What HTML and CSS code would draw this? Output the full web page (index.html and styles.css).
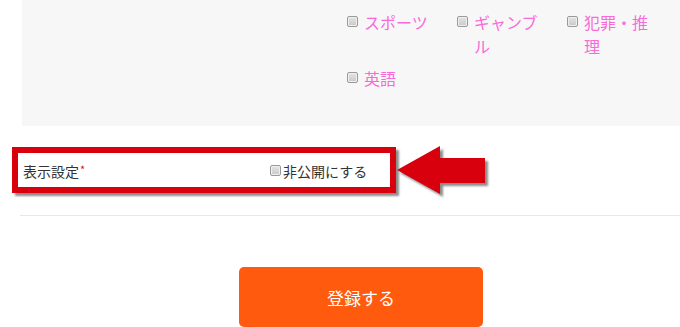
FILE: index.html
```html
<!DOCTYPE html>
<html lang="ja">
<head>
<meta charset="UTF-8">
<meta name="viewport" content="width=device-width, initial-scale=1.0">
<title>登録フォーム</title>
<link rel="stylesheet" href="styles.css">
</head>
<body>

<!-- Genre choices (tail of the list) -->
<div class="panel">
    <div class="choices">
        <label class="choice"><input type="checkbox"><span>スポーツ</span></label>
        <label class="choice"><input type="checkbox"><span>ギャンブル</span></label>
        <label class="choice"><input type="checkbox"><span>犯罪・推理</span></label>
        <label class="choice"><input type="checkbox"><span>英語</span></label>
    </div>
</div>

<!-- Visibility row, with the red annotation on top -->
<div class="row">
    <div class="row-label">表示設定<span class="req">*</span></div>
    <label class="private"><input type="checkbox">非公開にする</label>

    <div class="mark-box"></div>
    <svg class="mark-arrow" width="100" height="60" viewBox="0 0 100 60">
        <polygon points="2,25 45,1 45,13 90,13 90,38 45,38 45,49" fill="#d9000d"/>
    </svg>
</div>

<div class="actions">
    <button class="submit">登録する</button>
</div>

</body>
</html>
```

FILE: styles.css
```css
body {
    margin: 0;
    background-color: #ffffff;
    font-family: "Noto Sans CJK JP", "Noto Sans", sans-serif;
    color: #333333;
    overflow: hidden;
}

.panel {
    margin-left: 22px;
    height: 126px;
    background-color: #f7f7f7;
}

.choices {
    display: flex;
    flex-wrap: wrap;
    width: 330px;
    margin-left: 325px;
    padding-top: 10px;
    row-gap: 8px;
}

.choice {
    display: flex;
    align-items: flex-start;
    width: 110px;
    font-size: 16px;
    line-height: 24px;
    color: #f76ad9;
}

.choice span {
    width: 72px;
}

input[type="checkbox"] {
    appearance: none;
    -webkit-appearance: none;
    margin: 0;
    width: 11px;
    height: 11px;
    border: 1px solid #9a9a9a;
    border-radius: 2px;
    background: linear-gradient(#e4e4e4, #c9c9c9);
    box-shadow: inset 0 0 0 1px #efefef;
}

.choice input {
    margin-top: 6px;
    margin-right: 6px;
}

.row {
    position: relative;
    display: flex;
    align-items: center;
    margin-left: 20px;
    padding-left: 3px;
    height: 89px;
    border-bottom: 1px solid #e8e8e8;
    font-size: 14px;
}

.row-label {
    width: 247px;
}

.req {
    color: #e0102a;
    font-size: 11px;
    vertical-align: top;
    margin-left: 1px;
}

.private {
    display: flex;
    align-items: center;
}

.private input {
    margin-right: 2px;
}

/* annotation overlay */
.mark-box {
    position: absolute;
    left: -8px;
    top: 21px;
    width: 372px;
    height: 34px;
    border: 6px solid #d9000d;
    box-shadow: 3px 3px 2px rgba(0, 0, 0, 0.45);
}

.mark-arrow {
    position: absolute;
    left: 375px;
    top: 19px;
    filter: drop-shadow(3px 3px 1px rgba(0, 0, 0, 0.45));
}

.actions {
    padding-top: 51px;
    padding-left: 239px;
}

.submit {
    width: 244px;
    height: 60px;
    border: none;
    border-radius: 5px;
    background-color: #ff5a0e;
    color: #ffffff;
    font-family: "Noto Sans CJK JP", "Noto Sans", sans-serif;
    font-size: 17px;
    cursor: pointer;
}
```
